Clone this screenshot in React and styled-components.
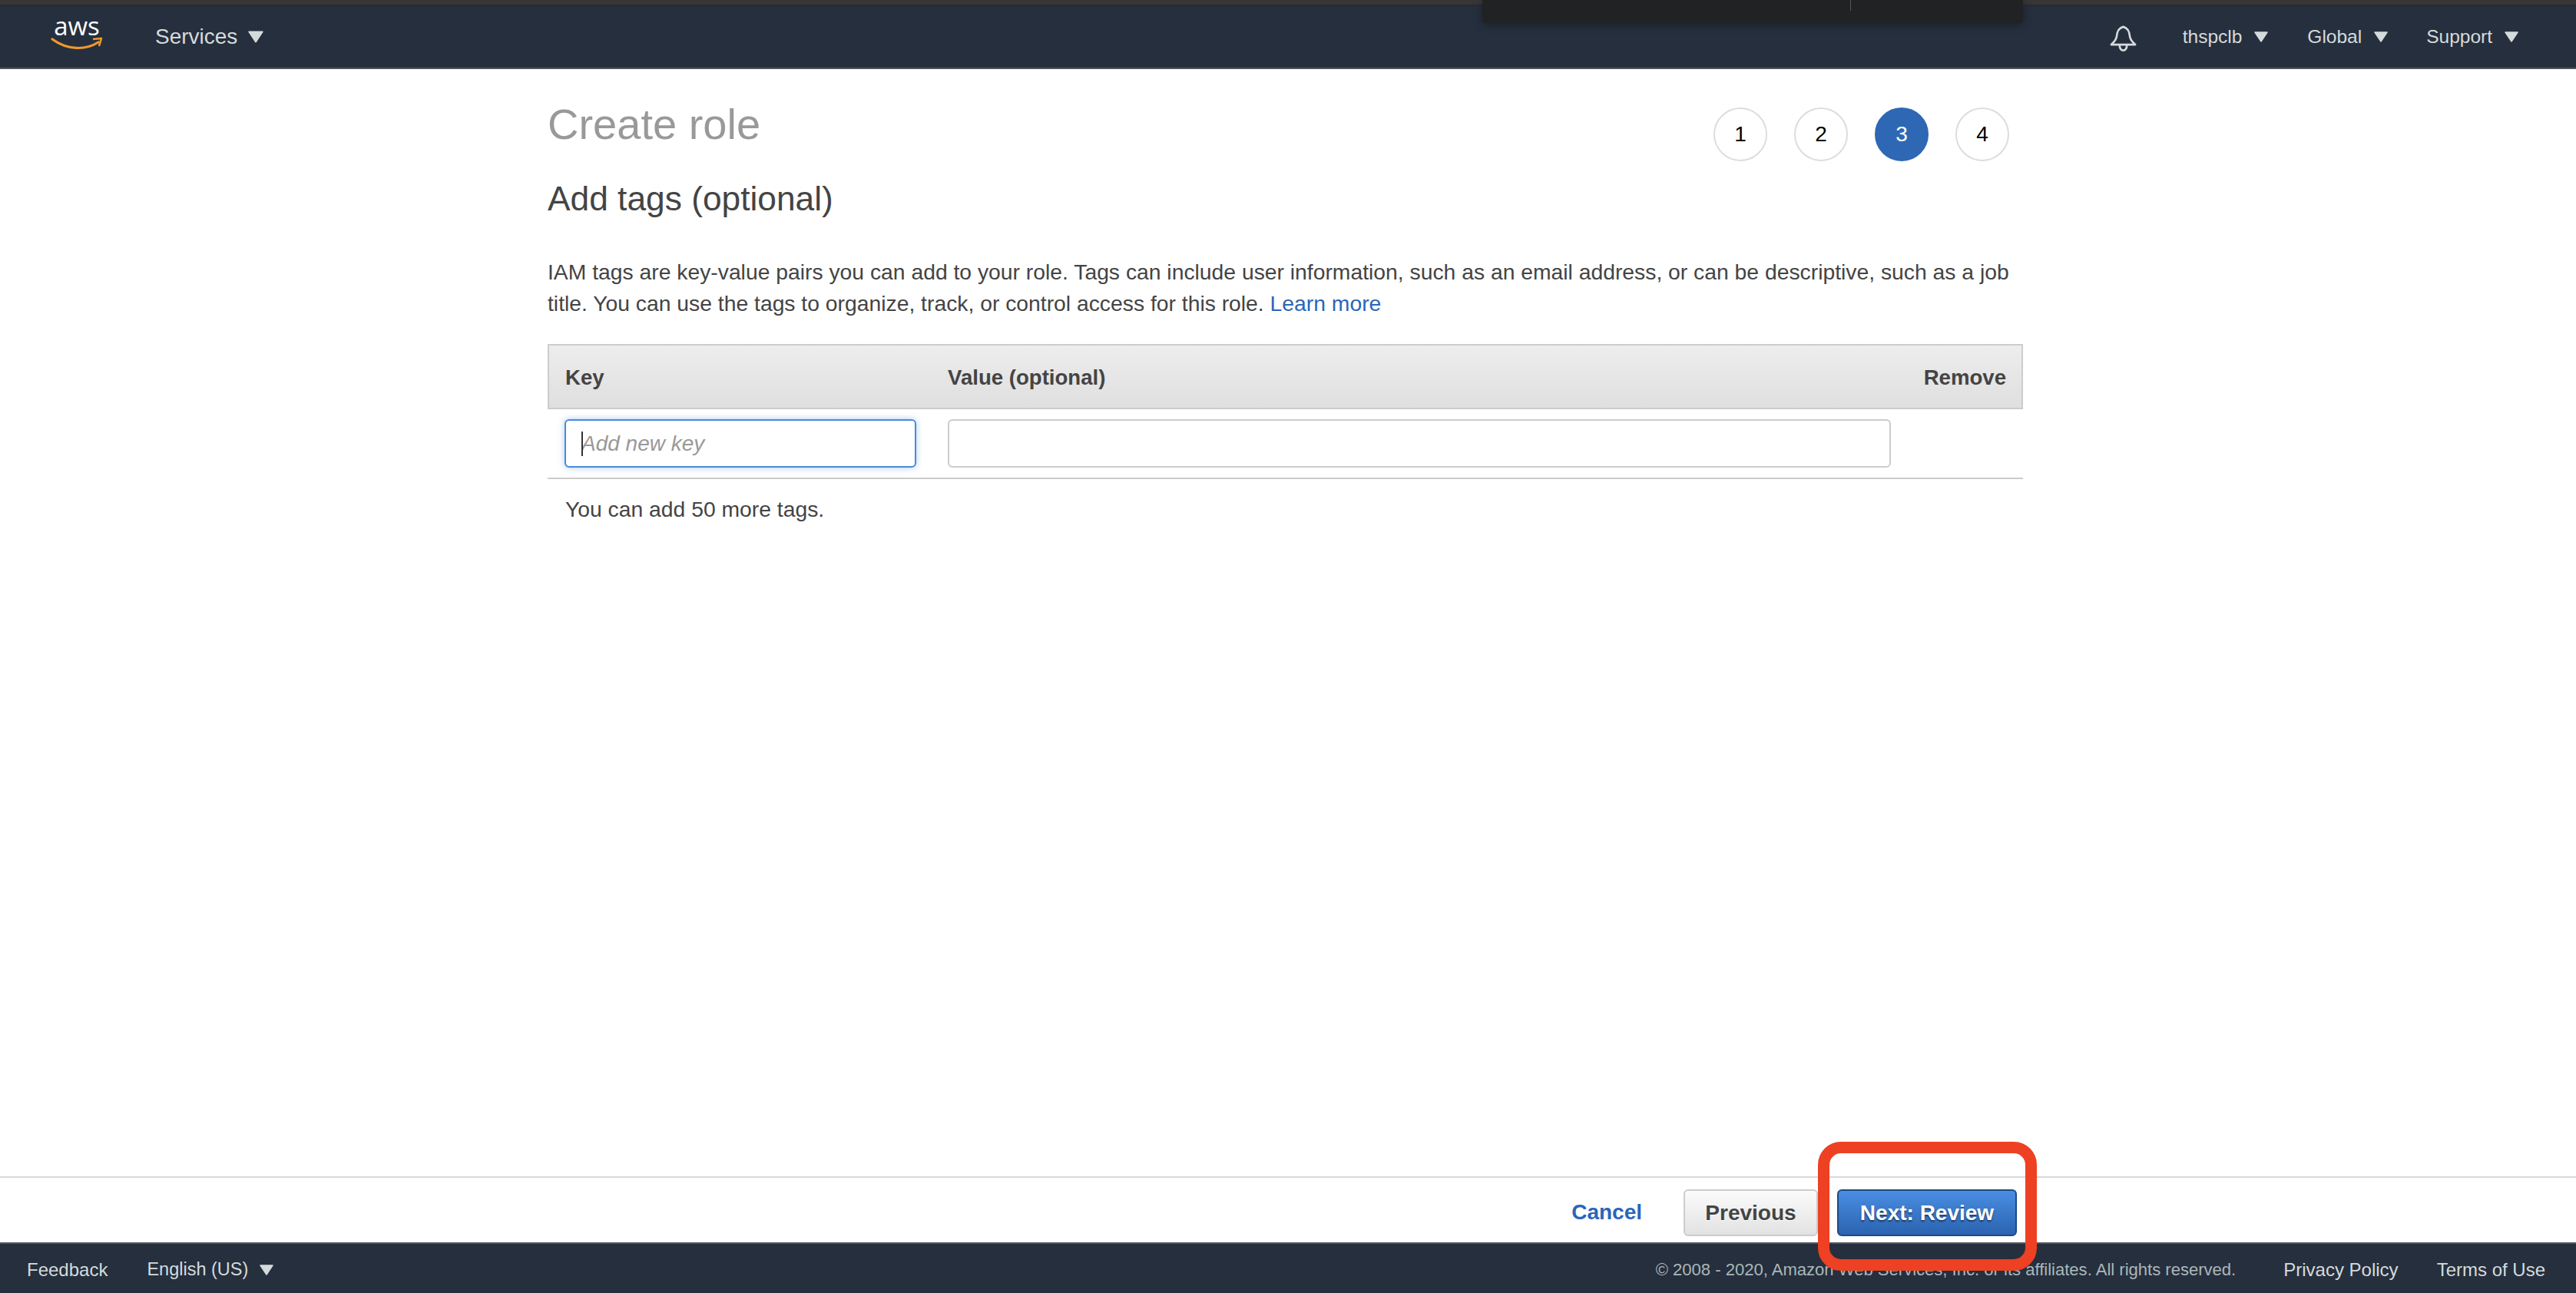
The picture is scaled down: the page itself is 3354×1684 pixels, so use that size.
import React from "react";
import styled, { createGlobalStyle } from "styled-components";

const GlobalStyle = createGlobalStyle`
  html, body { margin: 0; padding: 0; background: #fff; }
  body { font-family: "Liberation Sans", Arial, sans-serif; color: #444; }
`;

const Page = styled.div`
  position: relative;
  display: flex;
  flex-direction: column;
  height: 1684px;
  overflow: hidden;
`;

const BrowserStrip = styled.div`
  height: 6px;
  background: #363636;
  border-bottom: 2px solid #2a2a2a;
`;

const FloatingBar = styled.div`
  position: absolute;
  left: 1930px;
  top: 0;
  width: 704px;
  height: 30px;
  background: #212224;
  border-radius: 0 0 4px 4px;
  box-shadow: 0 2px 12px rgba(0, 0, 0, 0.35);
  &:after {
    content: "";
    position: absolute;
    left: 479px;
    top: 0;
    width: 1px;
    height: 14px;
    background: #555;
  }
`;

const NavBar = styled.header`
  display: flex;
  align-items: center;
  height: 80px;
  padding: 0 75px 0 67px;
  background: #262f3e;
  border-bottom: 2px solid #4f5660;
  color: #d5dbdb;
`;

const Logo = styled.svg`
  display: block;
  width: 66px;
  height: 46px;
  margin-top: -6px;
  overflow: visible;
`;

const NavItem = styled.div`
  display: flex;
  align-items: center;
  gap: ${props => props.$gap || 16}px;
  margin-left: ${props => props.$left || 0}px;
  font-size: ${props => props.$size || 24.5}px;
  line-height: 30px;
`;

const NavRight = styled.div`
  display: flex;
  align-items: center;
  margin-left: auto;
`;

const Bell = styled.svg`
  display: block;
  width: 35px;
  height: 35px;
  margin: 5px 60px 0 0;
`;

const CaretIcon = styled.svg`
  display: block;
  flex: none;
  width: ${props => props.$w || 18}px;
  height: ${props => props.$h || 14}px;
`;

const Main = styled.main`
  flex: 1;
  width: 1921px;
  margin-left: 713px;
`;

const TitleRow = styled.div`
  display: flex;
  justify-content: space-between;
  align-items: flex-start;
  padding: 43px 18px 0 0;
`;

const Title = styled.h1`
  margin: -2px 0 0;
  font-size: 56px;
  font-weight: 400;
  line-height: 62px;
  color: #999;
`;

const Steps = styled.div`
  display: flex;
  gap: 35px;
  margin-top: 7px;
`;

const Step = styled.div`
  display: flex;
  align-items: center;
  justify-content: center;
  box-sizing: border-box;
  width: 70px;
  height: 70px;
  border-radius: 50%;
  border: 2px solid ${props => (props.$active ? "#2e68b5" : "#ddd")};
  background: ${props => (props.$active ? "#2e68b5" : "#fff")};
  color: ${props => (props.$active ? "#fff" : "#000")};
  font-size: 28px;
`;

const Subtitle = styled.h2`
  margin: 23px 0 0;
  font-size: 44.3px;
  font-weight: 400;
  line-height: 52px;
  color: #444;
`;

const Intro = styled.p`
  margin: 49px 0 0;
  width: 1915px;
  font-size: 28.3px;
  line-height: 41px;
  color: #444;
`;

const LearnMore = styled.a`
  color: #2a66b8;
`;

const TagHeader = styled.div`
  display: grid;
  grid-template-columns: 498px 1fr auto;
  align-items: center;
  box-sizing: border-box;
  height: 85px;
  margin-top: 32px;
  padding: 2px 20px 0 21px;
  border: 2px solid #ccc;
  background: linear-gradient(#ededed, #dfdfdf);
  font-size: 27.6px;
  font-weight: 700;
  color: #444;
`;

const TagRow = styled.div`
  display: flex;
  gap: 41px;
  padding: 13px 0 13px 22px;
  border-bottom: 2px solid #ccc;
`;

const InputWrap = styled.div`
  position: relative;
  width: ${props => props.$w}px;
`;

const TagInput = styled.input`
  display: block;
  box-sizing: border-box;
  width: 100%;
  height: 63px;
  padding: 0 20px;
  border-radius: 6px;
  border: 2px solid ${props => (props.$focus ? "#4a8ad8" : "#ccc")};
  box-shadow: ${props => (props.$focus ? "0 0 8px rgba(74, 138, 216, 0.45)" : "none")};
  outline: none;
  background: #fff;
  font-family: inherit;
  font-size: 28px;
  &::placeholder {
    color: #999;
    font-style: italic;
    opacity: 1;
  }
`;

const Cursor = styled.span`
  position: absolute;
  left: 22px;
  top: 16px;
  width: 2px;
  height: 32px;
  background: #333;
`;

const TagHint = styled.p`
  margin: 0;
  padding: 22px 0 0 23px;
  font-size: 28.3px;
  line-height: 34px;
  color: #444;
`;

const ActionBar = styled.div`
  display: flex;
  align-items: center;
  justify-content: flex-end;
  box-sizing: border-box;
  height: 86px;
  padding: 6px 728px 0 0;
  border-top: 2px solid #d8d8d8;
`;

const CancelLink = styled.a`
  margin-right: 54px;
  font-size: 28px;
  font-weight: 700;
  color: #2a66b8;
`;

const Button = styled.button`
  box-sizing: border-box;
  width: ${props => props.$w}px;
  height: 61px;
  margin-left: ${props => props.$left || 0}px;
  padding: 2px 0 0;
  border-radius: 6px;
  font-family: inherit;
  font-size: 28px;
  font-weight: 700;
  border: 2px solid ${props => (props.$primary ? "#1d4a87" : "#ccc")};
  background: ${props =>
    props.$primary ? "linear-gradient(#4a8ee2, #2a63b0)" : "linear-gradient(#fbfbfb, #e2e2e2)"};
  color: ${props => (props.$primary ? "#fff" : "#444")};
  text-shadow: ${props => (props.$primary ? "0 2px 2px rgba(0, 0, 0, 0.5)" : "0 1px 1px #fff")};
`;

const Footer = styled.footer`
  display: flex;
  align-items: center;
  box-sizing: border-box;
  height: 66px;
  padding: 3px 40px 0 35px;
  background: #262f3e;
  border-top: 2px solid #4f5660;
  color: #d5dbdb;
  font-size: 24px;
`;

const FooterLang = styled.div`
  display: flex;
  align-items: center;
  gap: 15px;
  margin-left: 51px;
  font-size: 23.5px;
`;

const Copyright = styled.span`
  margin-left: auto;
  font-size: 22.05px;
  color: #aab7b8;
`;

const FooterLink = styled.a`
  margin-left: ${props => props.$left}px;
`;

const Callout = styled.div`
  position: absolute;
  left: 2367px;
  top: 1487px;
  box-sizing: border-box;
  width: 285px;
  height: 168px;
  border: 15px solid #ee4023;
  border-radius: 30px;
`;

const Caret = ({ w, h }) => (
  <CaretIcon $w={w} $h={h} viewBox="0 0 18 14">
    <polygon points="1,1 17,1 9,13" fill="#d5dbdb" stroke="#d5dbdb" strokeWidth="1.5" strokeLinejoin="round" />
  </CaretIcon>
);

export default function App() {
  return (
    <Page>
      <GlobalStyle />
      <BrowserStrip />
      <FloatingBar />
      <NavBar>
        <Logo viewBox="0 0 66 46">
          <text x="33" y="24" textAnchor="middle" fontFamily="Open Sans, Liberation Sans, sans-serif" fontSize="33" fill="#fff">aws</text>
          <path d="M1 29 C 20 43, 44 44, 61 33" fill="none" stroke="#f0992b" strokeWidth="3.2" strokeLinecap="round" />
          <path d="M54 29 L65 28 L62 38" fill="none" stroke="#f0992b" strokeWidth="2.6" strokeLinejoin="round" />
        </Logo>
        <NavItem $left={69} $size={28} $gap={14}>
          Services <Caret w={20} h={16} />
        </NavItem>
        <NavRight>
          <Bell viewBox="0 0 37 37" fill="none" stroke="#d5dbdb" strokeWidth="2.8" strokeLinejoin="round">
            <path d="M18.5 2 C 11 4, 10 10, 9.5 15 C 9 20, 6 23, 2 26.5 L 35 26.5 C 31 23, 28 20, 27.5 15 C 27 10, 26 4, 18.5 2 Z" />
            <path d="M13.5 27 C 13 37, 24 37, 23.5 27" />
          </Bell>
          <NavItem>thspclb <Caret /></NavItem>
          <NavItem $left={51}>Global <Caret /></NavItem>
          <NavItem $left={50}>Support <Caret /></NavItem>
        </NavRight>
      </NavBar>
      <Main>
        <TitleRow>
          <Title>Create role</Title>
          <Steps>
            {[1, 2, 3, 4].map(n => (
              <Step key={n} $active={n === 3}>{n}</Step>
            ))}
          </Steps>
        </TitleRow>
        <Subtitle>Add tags (optional)</Subtitle>
        <Intro>
          IAM tags are key-value pairs you can add to your role. Tags can include user information, such as an email address, or can be descriptive, such as a job title. You can use the tags to organize, track, or control access for this role. <LearnMore>Learn more</LearnMore>
        </Intro>
        <TagHeader>
          <span>Key</span>
          <span>Value (optional)</span>
          <span>Remove</span>
        </TagHeader>
        <TagRow>
          <InputWrap $w={458}>
            <TagInput $focus placeholder="Add new key" readOnly />
            <Cursor />
          </InputWrap>
          <InputWrap $w={1228}>
            <TagInput readOnly />
          </InputWrap>
        </TagRow>
        <TagHint>You can add 50 more tags.</TagHint>
      </Main>
      <ActionBar>
        <CancelLink>Cancel</CancelLink>
        <Button $w={175}>Previous</Button>
        <Button $primary $w={234} $left={25}>Next: Review</Button>
      </ActionBar>
      <Footer>
        <span>Feedback</span>
        <FooterLang>English (US) <Caret /></FooterLang>
        <Copyright>© 2008 - 2020, Amazon Web Services, Inc. or its affiliates. All rights reserved.</Copyright>
        <FooterLink $left={62}>Privacy Policy</FooterLink>
        <FooterLink $left={50}>Terms of Use</FooterLink>
      </Footer>
      <Callout />
    </Page>
  );
}
